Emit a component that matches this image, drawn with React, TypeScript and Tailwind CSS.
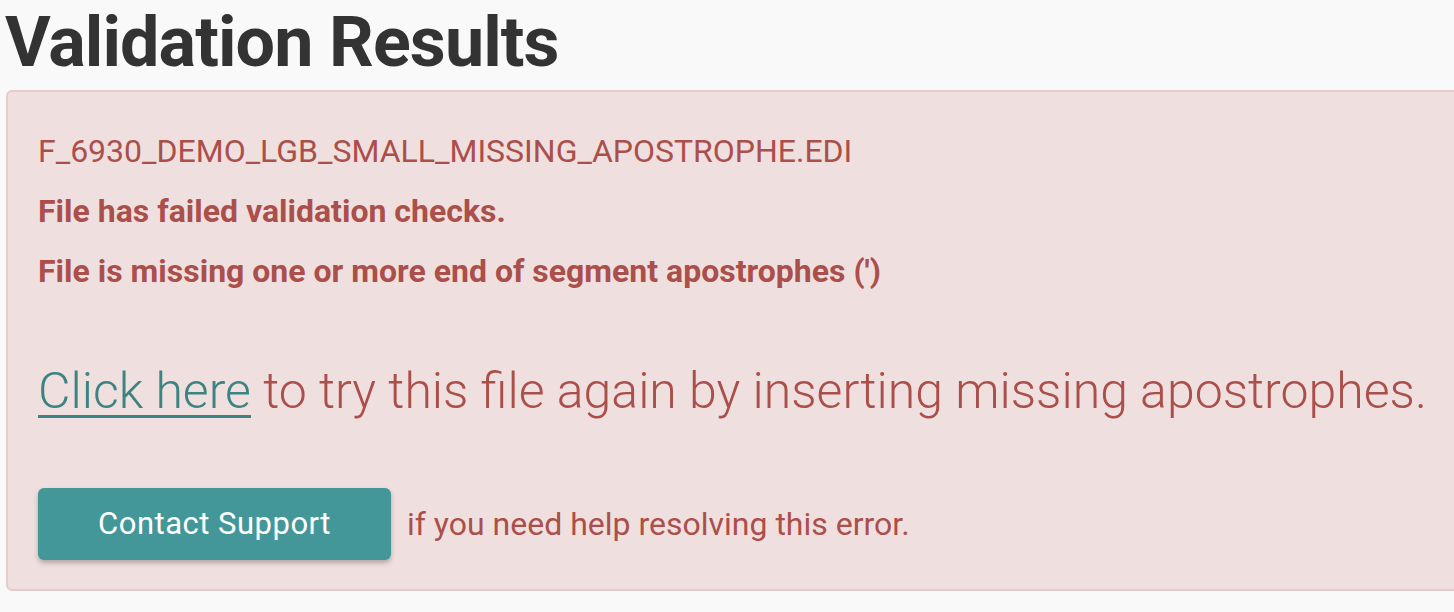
export default function App() {
  return (
    <div className="min-h-screen bg-[#f9f9f9] font-['Roboto',sans-serif] overflow-hidden">
      {/* Heading */}
      <h1 className="pl-[5px] text-[70px] leading-[84px] font-bold text-[#333333] tracking-[-0.9px]">
        Validation Results
      </h1>

      {/* Error panel */}
      <div className="mt-[6px] ml-[6px] w-[1470px] h-[501px] rounded-[6px] border-2 border-[#e8cacd] bg-[#f0dfdf] pl-[30px] pt-[29px] text-[#ab4f4b]">
        <div className="text-[32px] leading-[60px]">F_6930_DEMO_LGB_SMALL_MISSING_APOSTROPHE.EDI</div>
        <div className="text-[32px] leading-[60px] font-bold">File has failed validation checks.</div>
        <div className="text-[32px] leading-[60px] font-bold">
          File is missing one or more end of segment apostrophes (')
        </div>

        <div className="mt-[55px] text-[50px] leading-[70px] font-light">
          <a href="#" className="text-[#3c8482] underline decoration-[3px] underline-offset-[7px]">
            Click here
          </a>{" "}
          to try this file again by inserting missing apostrophes.
        </div>

        <div className="mt-[62px] flex items-center">
          <button className="w-[353px] h-[72px] rounded-[6px] bg-[#449799] text-white text-[31px] leading-[72px] tracking-[0.5px] shadow-[0_3px_5px_rgba(0,0,0,0.25)]">
            Contact Support
          </button>
          <span className="ml-[16px] text-[32px] leading-[72px]">if you need help resolving this error.</span>
        </div>
      </div>
    </div>
  )
}
